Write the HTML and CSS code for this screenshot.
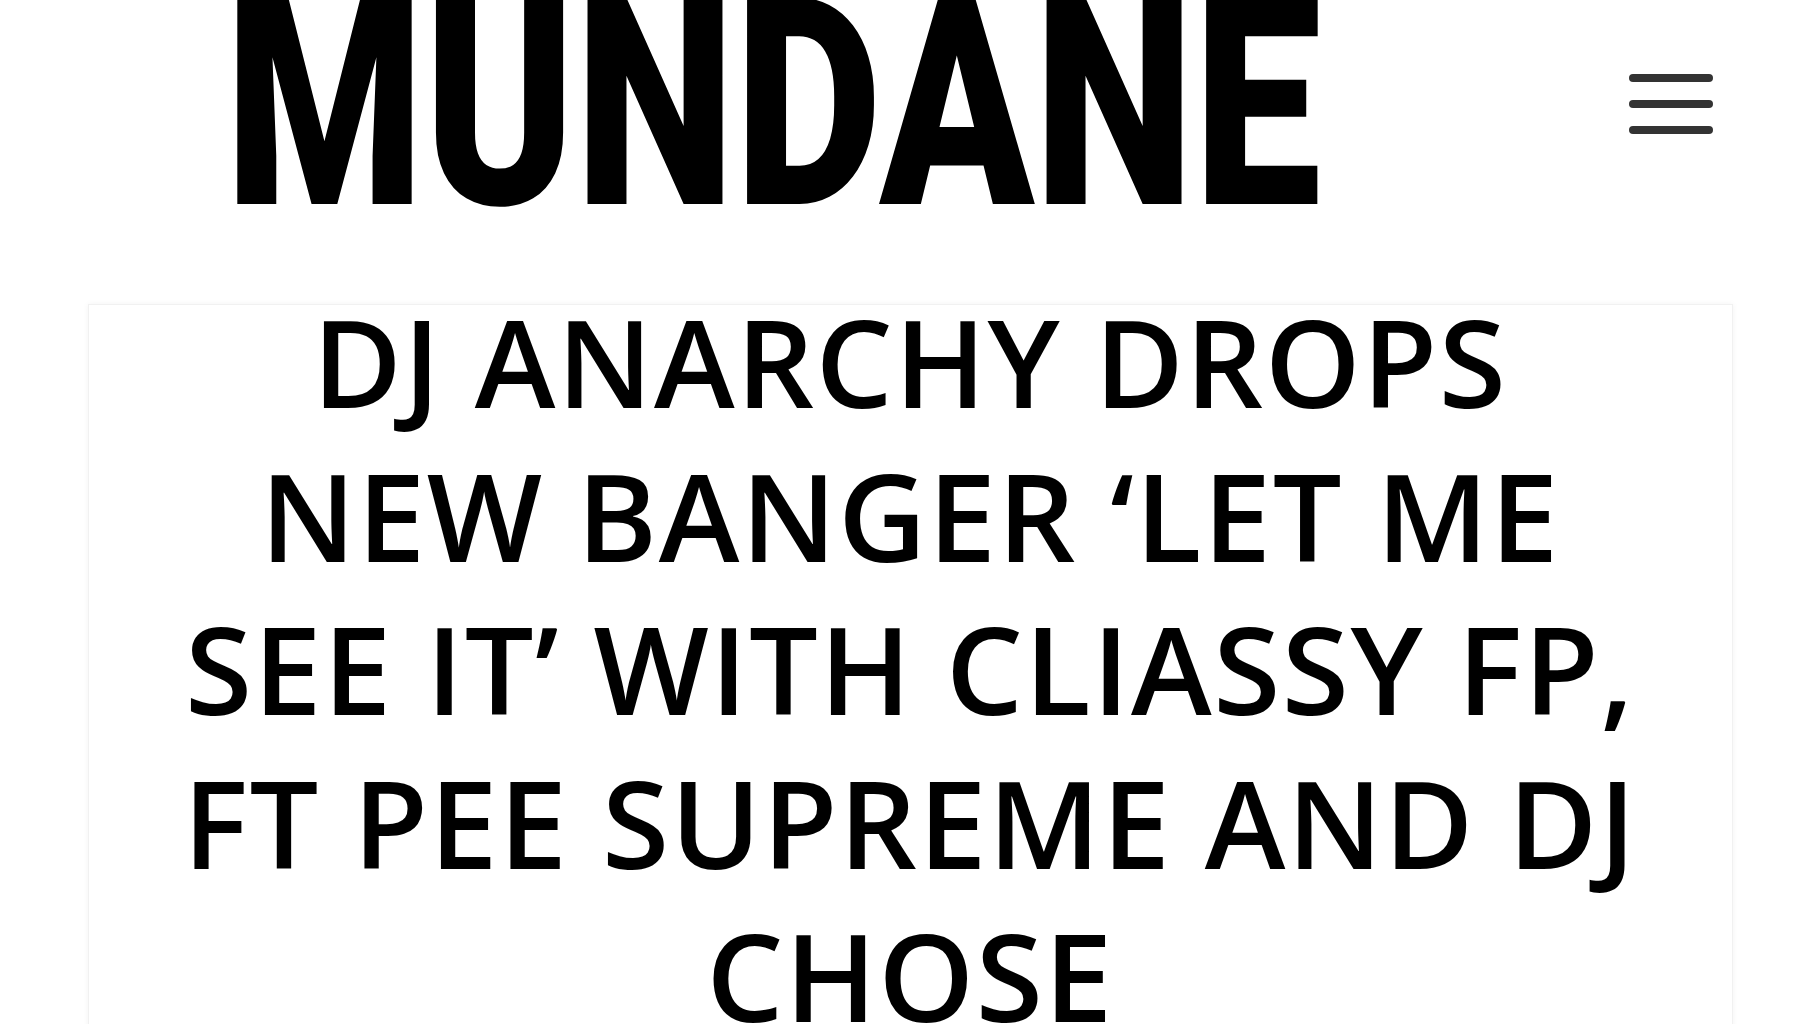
FILE: index.html
```html
<!DOCTYPE html>
<html lang="en">
<head>
<meta charset="utf-8">
<title>Mundane</title>
<link rel="stylesheet" href="styles.css">
</head>
<body>
<header class="site-header">
  <a class="logo" href="#" aria-label="Mundane">
    <svg class="logo-svg" width="1096" height="206" viewBox="0 0 1096 206">
      <text x="0" y="205" textLength="1096" lengthAdjust="spacingAndGlyphs" class="logo-text">MUNDANE</text>
    </svg>
  </a>
  <button class="menu-toggle" aria-label="Menu">
    <svg width="88" height="62" viewBox="0 0 88 62">
      <g stroke="#333" stroke-width="8" stroke-linecap="round">
        <line x1="5" y1="5" x2="81" y2="5"/>
        <line x1="5" y1="31" x2="81" y2="31"/>
        <line x1="5" y1="57" x2="81" y2="57"/>
      </g>
    </svg>
  </button>
</header>
<main class="content">
  <article class="post-card">
    <h1 class="post-title">DJ ANARCHY DROPS NEW BANGER ‘LET ME SEE IT’ WITH CLIASSY FP, FT PEE SUPREME AND DJ CHOSE</h1>
  </article>
</main>
</body>
</html>
```

FILE: styles.css
```css
html, body {
  margin: 0;
  padding: 0;
  background: #ffffff;
  overflow: hidden;
  height: 1024px;
}

body {
  font-family: "Open Sans", "Noto Sans", sans-serif;
  color: #000;
}

.site-header {
  display: flex;
  align-items: flex-start;
  height: 304px;
  padding-left: 225px;
  padding-right: 104px;
}

.logo {
  display: block;
  margin-top: -1px;
  text-decoration: none;
}

.logo-svg {
  display: block;
  overflow: visible;
}

.logo-text {
  font-family: Roboto, "Liberation Sans", sans-serif;
  font-weight: 900;
  font-size: 290px;
  fill: #000;
}

.menu-toggle {
  margin-left: auto;
  margin-top: 73px;
  padding: 0;
  border: 0;
  background: transparent;
  line-height: 0;
}

.menu-toggle svg {
  display: block;
}

.content {
  display: flex;
  justify-content: center;
}

.post-card {
  width: 1645px;
  box-sizing: border-box;
  padding: 0 89px;
  border: 1px solid #f1f1f1;
  box-shadow: 0 0 6px rgba(0, 0, 0, 0.05);
  min-height: 800px;
}

.post-title {
  margin: -20px 0 0;
  font-size: 122px;
  font-weight: 600;
  letter-spacing: 1.5px;
  line-height: 153.5px;
  text-align: center;
  color: #000;
}
```
